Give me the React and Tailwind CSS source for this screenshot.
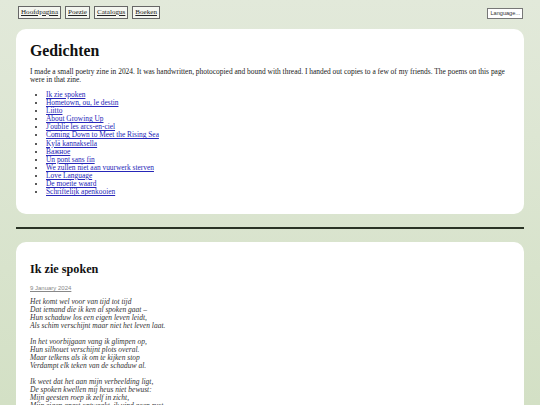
const poems = [
  'Ik zie spoken',
  'Hometown, ou, le destin',
  'Liitto',
  'About Growing Up',
  "J'oublie les arcs-en-ciel",
  'Coming Down to Meet the Rising Sea',
  'Kylä kannaksella',
  'Важное',
  'Un pont sans fin',
  'We zullen niet aan vuurwerk sterven',
  'Love Language',
  'De moeite waard',
  'Schriftelijk apenkooien',
];

const stanzas = [
  [
    'Het komt wel voor van tijd tot tijd',
    'Dat iemand die ik ken al spoken gaat –',
    'Hun schaduw los een eigen leven leidt,',
    'Als schim verschijnt maar niet het leven laat.',
  ],
  [
    'In het voorbijgaan vang ik glimpen op,',
    'Hun silhouet verschijnt plots overal.',
    'Maar telkens als ik om te kijken stop',
    'Verdampt elk teken van de schaduw al.',
  ],
  [
    'Ik weet dat het aan mijn verbeelding ligt,',
    'De spoken kwellen mij heus niet bewust:',
    'Mijn geesten roep ik zelf in zicht,',
    'Mijn eigen angst ontwaakt, ik vind geen rust.',
  ],
];

const navItems = ['Hoofdpagina', 'Poezie', 'Catalogus', 'Boeken'];

export default function App() {
  return (
    <div
      className="h-[405px] overflow-hidden bg-gradient-to-b from-[#e2e9da] to-[#d3e0c5] text-[#222]"
      style={{ fontFamily: '"Liberation Serif", serif' }}
    >
      <nav className="flex items-center justify-between px-[18px] pt-[6px] pb-[10px]">
        <div className="flex gap-[4px]">
          {navItems.map((item) => (
            <a
              key={item}
              href="#"
              className="block h-[13px] border border-[#666] bg-[#f4f6f0] px-[2px] text-[7.1px] leading-[11px] text-[#222] underline"
            >
              {item}
            </a>
          ))}
        </div>
        <div
          className="mr-[-1px] mt-[2px] h-[11px] border border-[#777] bg-white px-[2px] text-[5.6px] leading-[9px] text-[#333]"
          style={{ fontFamily: '"Liberation Sans", sans-serif' }}
        >
          Language...
        </div>
      </nav>

      <main className="px-[16px]">
        <section className="h-[185px] rounded-[10px] bg-white px-[14px] pt-[13px]">
          <h1 className="text-[15.8px] font-bold leading-[18px] text-[#111]">Gedichten</h1>
          <p className="mt-[8px] text-[7.45px] leading-[8px]">
            I made a small poetry zine in 2024. It was handwritten, photocopied and bound with thread. I handed out
            copies to a few of my friends. The poems on this page were in that zine.
          </p>
          <ul className="mt-[7px] list-disc pl-[16px] text-[7.4px] leading-[8.1px]">
            {poems.map((p) => (
              <li key={p}>
                <a href="#" className="text-[#2626b8] underline">
                  {p}
                </a>
              </li>
            ))}
          </ul>
        </section>

        <hr className="my-[13px] border-t-[2px] border-[#2a3325]" />

        <section className="rounded-[10px] bg-white px-[14px] pt-[20px] pb-[20px]">
          <h2 className="text-[12.2px] font-bold leading-[14px] text-[#111]">Ik zie spoken</h2>
          <div
            className="mt-[9px] text-[6px] leading-[7px] text-[#888] underline"
            style={{ fontFamily: '"Liberation Sans", sans-serif' }}
          >
            9 January 2024
          </div>
          <div className="mt-[6px] flex flex-col gap-[8px] text-[7.5px] italic leading-[8px] text-[#333]">
            {stanzas.map((s, i) => (
              <p key={i}>
                {s.map((line) => (
                  <span key={line} className="block">
                    {line}
                  </span>
                ))}
              </p>
            ))}
          </div>
        </section>
      </main>
    </div>
  );
}
